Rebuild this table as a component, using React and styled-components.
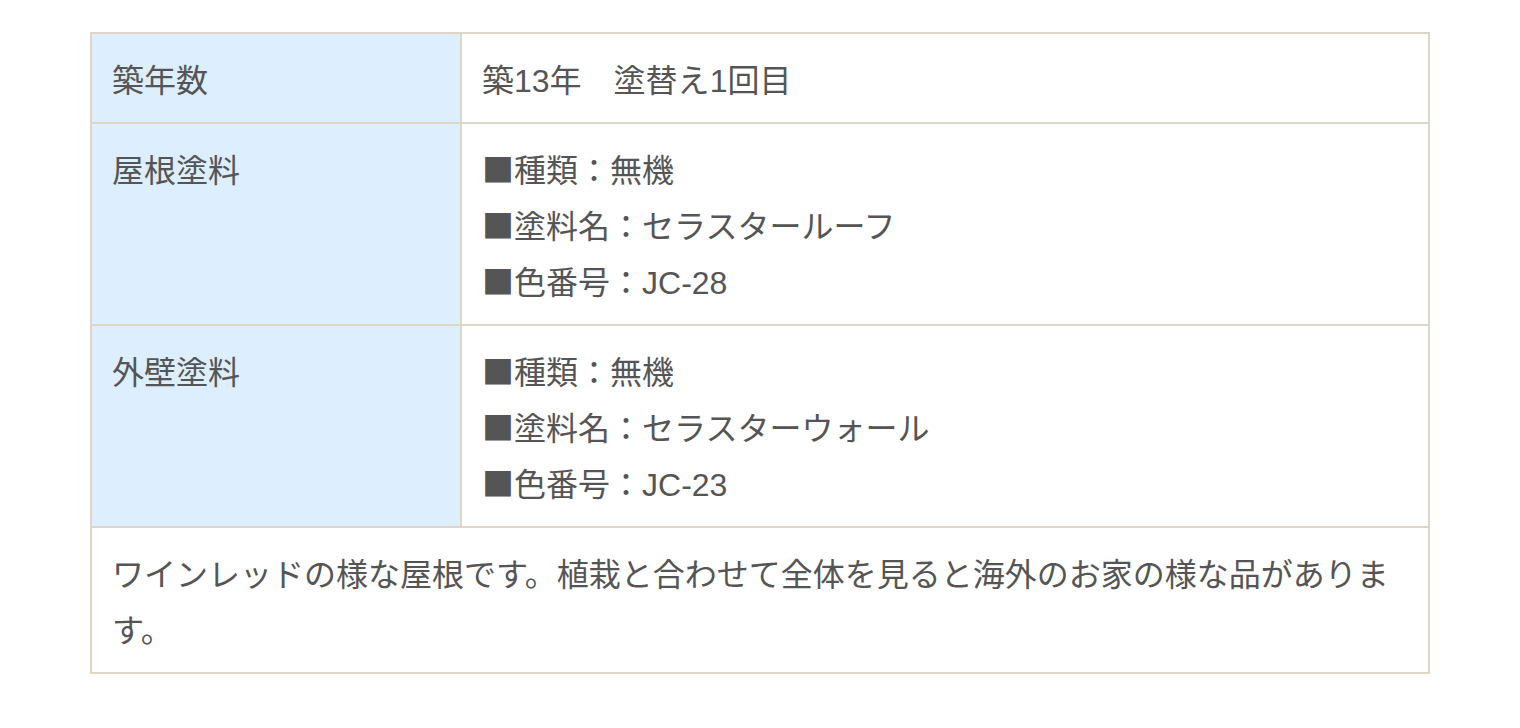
import React from 'react';
import styled, { createGlobalStyle } from 'styled-components';

const Global = createGlobalStyle`
  html, body {
    margin: 0;
    padding: 0;
    background: #fff;
  }
  body {
    font-family: "Liberation Sans", "Noto Sans CJK JP", sans-serif;
    color: #555;
  }
`;

const Page = styled.div`
  padding: 32px 90px;
`;

const Table = styled.table`
  width: 100%;
  border-collapse: collapse;
  border: 2px solid #ded6c8;
  font-size: 32px;
  line-height: 56px;
`;

const Th = styled.th`
  width: 328px;
  text-align: left;
  vertical-align: top;
  font-weight: 400;
  background: #ddeeff;
  padding: 16px 20px;
  border: 2px solid #ded6c8;
  font-family: "Noto Sans CJK JP", sans-serif;
`;

const Td = styled.td`
  vertical-align: top;
  padding: 16px 20px;
  border: 2px solid #ded6c8;
  font-family: ${p => (p.$jp ? '"Noto Sans CJK JP", sans-serif' : 'inherit')};
`;

const Line = styled.div`
  height: 56px;
  white-space: nowrap;
`;

const Mark = styled.span`
  font-family: "Noto Sans CJK JP", sans-serif;
  color: #555;
`;

const Jp = styled.span`
  font-family: "Noto Sans CJK JP", sans-serif;
`;

const paints = [
  {
    label: '屋根塗料',
    kind: '無機',
    name: 'セラスタールーフ',
    code: 'JC-28',
  },
  {
    label: '外壁塗料',
    kind: '無機',
    name: 'セラスターウォール',
    code: 'JC-23',
  },
];

function PaintInfo({ kind, name, code }) {
  return (
    <>
      <Line><Mark>■</Mark><Jp>種類：{kind}</Jp></Line>
      <Line><Mark>■</Mark><Jp>塗料名：{name}</Jp></Line>
      <Line><Mark>■</Mark><Jp>色番号：</Jp>{code}</Line>
    </>
  );
}

export default function App() {
  return (
    <Page>
      <Global />
      <Table>
        <tbody>
          <tr>
            <Th>築年数</Th>
            <Td>
              <Line><Jp>築</Jp>13<Jp>年　塗替え</Jp>1<Jp>回目</Jp></Line>
            </Td>
          </tr>
          {paints.map(p => (
            <tr key={p.label}>
              <Th>{p.label}</Th>
              <Td>
                <PaintInfo kind={p.kind} name={p.name} code={p.code} />
              </Td>
            </tr>
          ))}
          <tr>
            <Td colSpan={2} $jp>
              ワインレッドの様な屋根です。植栽と合わせて全体を見ると海外のお家の様な品があります。
            </Td>
          </tr>
        </tbody>
      </Table>
    </Page>
  );
}
